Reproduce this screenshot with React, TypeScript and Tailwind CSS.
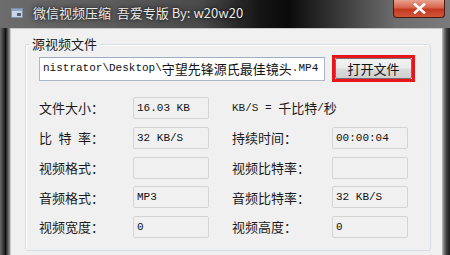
import React from "react";

const cjk = '"Noto Sans CJK SC", "Noto Sans", sans-serif';
const mono = '"Liberation Mono", "Noto Sans CJK SC", monospace';

type Field = { label: string; value?: string };

const rows: [Field, Field | null][] = [
  [{ label: "文件大小：", value: "16.03 KB" }, null],
  [{ label: "比\u2002特\u2002率：", value: "32 KB/S" }, { label: "持续时间：", value: "00:00:04" }],
  [{ label: "视频格式：", value: "" }, { label: "视频比特率：", value: "" }],
  [{ label: "音频格式：", value: "MP3" }, { label: "音频比特率：", value: "32 KB/S" }],
  [{ label: "视频宽度：", value: "0" }, { label: "视频高度：", value: "0" }],
];

function ValueBox({ value }: { value?: string }) {
  return (
    <div
      className="flex h-[22px] items-center rounded-[2px] border border-[#d4d4d4] bg-[#f0f0f0] pl-[3px] text-[11px] text-[#111]"
      style={{ fontFamily: mono }}
    >
      {value}
    </div>
  );
}

function Label({ text }: { text: string }) {
  return (
    <div className="flex h-[22px] items-center whitespace-pre text-[13px] text-[#1a1a1a]">
      {text}
    </div>
  );
}

function WindowIcon() {
  return (
    <svg width="12" height="10" viewBox="0 0 12 10">
      <rect x="0.5" y="0.5" width="11" height="9" fill="#c9d6e3" stroke="#7f93a8" />
      <rect x="1" y="1" width="10" height="2" fill="#8ea6bf" />
      <rect x="6" y="5" width="4" height="3" fill="#4c6078" />
    </svg>
  );
}

export default function App() {
  return (
    <div
      className="flex h-[255px] w-[450px] flex-col overflow-hidden bg-[#4a4a4a]"
      style={{ fontFamily: cjk }}
    >
      {/* title bar */}
      <div className="flex h-[28px] shrink-0 items-start bg-[linear-gradient(90deg,#6c6c6c_0%,#5d5d5d_25%,#4a4a4a_45%,#141414_58%,#0a0a0a_64%,#3c3c3c_76%,#6e6e6e_88%,#7a7a7a_100%)]">
        <div className="ml-[11px] mt-[8px] flex">
          <WindowIcon />
        </div>
        <div
          className="ml-[10px] mt-[4px] whitespace-pre text-[13px] leading-[18px] text-[#ececec]"
          style={{ textShadow: "0 0 6px rgba(0,0,0,0.9), 0 0 2px rgba(0,0,0,0.6)" }}
        >
          微信视频压缩  吾爱专版 By: w20w20
        </div>
        <div className="ml-auto mr-[5px] flex h-[18px] w-[52px] items-center justify-center rounded-b-[4px] border border-t-0 border-[#4d1a12] bg-[linear-gradient(180deg,#e7a28f_0%,#d8634b_45%,#c2391f_55%,#d2553a_100%)]">
          <svg width="13" height="11" viewBox="0 0 13 11">
            <path d="M2 1.5 L11 9.5 M11 1.5 L2 9.5" stroke="#ffffff" strokeWidth="2.6" strokeLinecap="square" />
          </svg>
        </div>
      </div>

      <div className="flex flex-1">
        <div className="w-[10px] shrink-0 bg-[linear-gradient(90deg,#6a6a6a_0%,#2e2e2e_40%,#111_55%,#5a5a5a_80%,#9a9a9a_100%)]" />

        {/* client area */}
        <div className="flex-1 border-l border-t border-[#c9c9c9] bg-[#f0f0f0] pt-[7px]">
          <fieldset className="ml-[14px] h-[215px] w-[406px] rounded-[3px] border border-[#d5dfe5] pl-[3px] shadow-[inset_1px_1px_0_#ffffff]">
            <legend className="px-[3px] text-[13px] leading-[16px] text-[#1a1a1a]">源视频文件</legend>

            <div className="pl-[10px]">
              <div className="mt-[3px] flex items-center gap-[7px]">
                <div className="flex h-[24px] w-[286px] items-center overflow-hidden whitespace-pre border border-[#abb7c6] border-t-[#9cafc4] bg-white pl-[3px] text-[#111]">
                  <span className="text-[11px]" style={{ fontFamily: mono }}>nistrator\Desktop\</span>
                  <span className="text-[13px]" style={{ fontFamily: cjk }}>守望先锋源氏最佳镜头</span>
                  <span className="text-[11px]" style={{ fontFamily: mono }}>.MP4</span>
                </div>
                <div className="flex h-[27px] w-[83px] border-[3px] border-[#e8151d]">
                  <button
                    type="button"
                    className="flex-1 rounded-[2px] border border-[#707070] bg-[linear-gradient(180deg,#f3f3f3_0%,#ebebeb_48%,#dcdcdc_52%,#cfcfcf_100%)] text-[13px] leading-none text-[#111]"
                  >
                    打开文件
                  </button>
                </div>
              </div>

              <div className="mt-[15px] grid grid-cols-[71px_76px_77px_76px] gap-x-[23px] gap-y-[7.75px]">
                {rows.map(([left, right], i) => (
                  <React.Fragment key={i}>
                    <Label text={left.label} />
                    <ValueBox value={left.value} />
                    {right ? (
                      <>
                        <Label text={right.label} />
                        <ValueBox value={right.value} />
                      </>
                    ) : (
                      <div className="col-span-2 flex h-[22px] items-center whitespace-pre text-[#1a1a1a]">
                        <span className="text-[11px]" style={{ fontFamily: mono }}>KB/S = </span>
                        <span className="text-[13px]">千比特</span>
                        <span className="text-[11px]" style={{ fontFamily: mono }}>/</span>
                        <span className="text-[13px]">秒</span>
                      </div>
                    )}
                  </React.Fragment>
                ))}
              </div>
            </div>
          </fieldset>
        </div>

        <div className="w-[8px] shrink-0 bg-[linear-gradient(90deg,#bdbdbd_0%,#6e6e6e_30%,#3a3a3a_60%,#1c1c1c_100%)]" />
      </div>
    </div>
  );
}
